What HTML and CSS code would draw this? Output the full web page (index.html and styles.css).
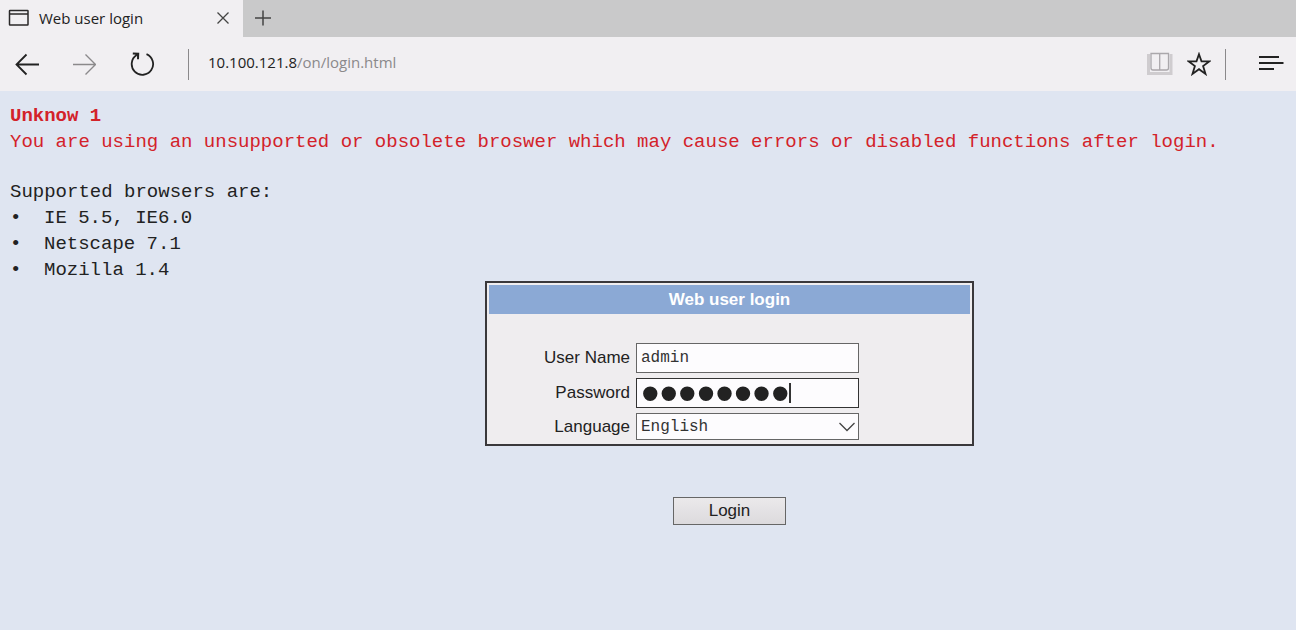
FILE: index.html
```html
<!DOCTYPE html>
<html lang="en">
<head>
    <meta charset="UTF-8">
    <meta name="viewport" content="width=device-width, initial-scale=1.0">
    <title>Web user login</title>
    <link rel="stylesheet" href="styles.css">
</head>
<body>
    <header class="browser">
        <div class="tabs">
            <div class="tab">
                <svg class="page-icon" width="22" height="18" viewBox="0 0 22 18" fill="none" stroke="#2a2829" stroke-width="1.5">
                    <rect x="1.5" y="1.5" width="18.5" height="14.5" rx="0.5"/>
                    <path d="M1.5 5H20"/>
                </svg>
                <span class="tab-title">Web user login</span>
                <button class="icon-button" type="button" aria-label="Close tab">
                    <svg width="14" height="14" viewBox="0 0 14 14" fill="none" stroke="#444" stroke-width="1.3">
                        <path d="M1.5 1.5L12.5 12.5M12.5 1.5L1.5 12.5"/>
                    </svg>
                </button>
            </div>
            <button class="icon-button new-tab" type="button" aria-label="New tab">
                <svg width="16" height="16" viewBox="0 0 16 16" fill="none" stroke="#444" stroke-width="1.5">
                    <path d="M8 0.5V15.5M0 8H16"/>
                </svg>
            </button>
        </div>
        <nav class="toolbar">
            <button class="icon-button" type="button" aria-label="Back">
                <svg width="24" height="24" viewBox="0 0 24 24" fill="none" stroke="#222" stroke-width="1.8">
                    <path d="M24 12.5H1.5M11.5 2.5L1.5 12.5L11.5 22.5"/>
                </svg>
            </button>
            <button class="icon-button" type="button" aria-label="Forward">
                <svg width="24" height="24" viewBox="0 0 24 24" fill="none" stroke="#8b898b" stroke-width="1.4">
                    <path d="M1 12.5H23.5M13.5 2.5L23.5 12.5L13.5 22.5"/>
                </svg>
            </button>
            <button class="icon-button" type="button" aria-label="Refresh">
                <svg width="26" height="26" viewBox="0 0 26 26" fill="none" stroke="#222" stroke-width="1.8">
                    <path d="M17.5 3.2A10.7 10.7 0 1 1 7.6 4.1"/>
                    <path d="M3.8 2.5L9.2 2.8L9 8.2" stroke-width="2"/>
                    <path d="M5.5 2.5H9.3V6.5Z" fill="#222" stroke="none"/>
                </svg>
            </button>
            <span class="divider"></span>
            <div class="address"><span class="host">10.100.121.8</span>/on/login.html</div>
            <div class="tools">
                <button class="icon-button" type="button" aria-label="Reading view">
                    <svg width="26" height="24" viewBox="0 0 26 24" fill="none" stroke="#aaa7ab" stroke-width="1.3">
                        <path d="M1.5 2V21.5H24V2" stroke="#cfcccf" stroke-width="3"/>
                        <path d="M4 1.5H21.5V16Q21.5 18 19.5 18H6Q4 18 4 16ZM12.7 2V18"/>
                    </svg>
                </button>
                <button class="icon-button" type="button" aria-label="Favorites">
                    <svg width="24" height="24" viewBox="0 0 24 24" fill="none" stroke="#222" stroke-width="1.8">
                        <path d="M12 2.2L14.5 9.4H22.2L16.1 14L18.5 21.9L12 17.2L5.5 21.9L7.9 14L1.8 9.4H9.5Z"/>
                    </svg>
                </button>
                <span class="divider"></span>
                <button class="icon-button menu" type="button" aria-label="Hub">
                    <svg width="26" height="18" viewBox="0 0 26 18" stroke="#222" stroke-width="2">
                        <path d="M1 2H21M1 8H25.5M1 14H16"/>
                    </svg>
                </button>
            </div>
        </nav>
    </header>

    <main class="page">
        <div class="warning">
            <strong>Unknow 1</strong>
            <p>You are using an unsupported or obsolete broswer which may cause errors or disabled functions after login.</p>
        </div>
        <div class="supported">
            <p>Supported browsers are:</p>
            <ul>
                <li>IE 5.5, IE6.0</li>
                <li>Netscape 7.1</li>
                <li>Mozilla 1.4</li>
            </ul>
        </div>

        <form class="login">
            <div class="login-box">
                <h1>Web user login</h1>
                <div class="fields">
                    <label for="username">User Name</label>
                    <input type="text" id="username" value="admin">
                    <label for="password">Password</label>
                    <div class="password">
                        <input type="password" id="password" value="12345678">
                        <span class="caret"></span>
                    </div>
                    <label for="language">Language</label>
                    <div class="select">
                        <select id="language">
                            <option>English</option>
                        </select>
                        <svg class="chevron" width="16" height="10" viewBox="0 0 16 10" fill="none" stroke="#444" stroke-width="1.3">
                            <path d="M0.5 1L8 8.5L15.5 1"/>
                        </svg>
                    </div>
                </div>
            </div>
            <button class="submit" type="button">Login</button>
        </form>
    </main>
</body>
</html>
```
FILE: styles.css
```css
* {
    box-sizing: border-box;
}
body {
    margin: 0;
    min-height: 100vh;
    background-color: #dfe5f1;
    color: #222;
    font-family: "Liberation Sans", Arial, sans-serif;
    font-size: 17px;
}
p, ul, h1 {
    margin: 0;
    padding: 0;
}
.browser {
    background-color: #f1eff2;
    font-family: "Open Sans", "Noto Sans", sans-serif;
    font-size: 15px;
}
.icon-button {
    display: flex;
    padding: 0;
    border: 0;
    background: none;
}
.tabs {
    display: flex;
    height: 37px;
    padding-bottom: 2px;
    background-color: #c9c9ca;
    box-shadow: inset 243px 0 #f1eff2;
}
.tab {
    display: flex;
    align-items: center;
    width: 243px;
    padding: 0 13px 0 8px;
}
.tab-title {
    flex: 1;
    margin-left: 9px;
}
.new-tab {
    align-self: center;
    margin-left: 12px;
}
.toolbar {
    display: flex;
    align-items: center;
    gap: 33px;
    height: 54px;
    padding: 0 12px 0 15px;
}
.divider {
    width: 1px;
    height: 31px;
    background-color: #8b898b;
}
.address {
    flex: 1;
    margin: 0 0 4px -14px;
    color: #8b898b;
}
.host {
    color: #222;
}
.tools {
    display: flex;
    align-items: center;
    gap: 14px;
}
.menu {
    margin-left: 18px;
}
.page {
    padding: 12px 10px;
}
.warning, .supported {
    font-family: "Liberation Mono", "Courier New", monospace;
    font-size: 19px;
    line-height: 26px;
}
.warning {
    margin-bottom: 24px;
    color: #d3222a;
}
.supported {
    margin-bottom: -2px;
}
.supported ul {
    list-style: none;
}
.supported li {
    display: flex;
}
.supported li::before {
    content: "•";
    width: 34px;
}
.login {
    display: flex;
    flex-direction: column;
    align-items: center;
    margin-left: 163px;
}
.login-box {
    width: 489px;
    padding: 2px 2px 4px;
    border: 2px solid #3a383b;
    background-color: #efedef;
}
.login-box h1 {
    margin-bottom: 29px;
    background-color: #8ba9d5;
    color: #fff;
    font-size: 17px;
    line-height: 29px;
    text-align: center;
}
.fields {
    display: grid;
    grid-template-columns: 141px 223px;
    gap: 5px 6px;
    align-items: center;
}
.fields label {
    text-align: right;
}
.fields input, .fields select {
    display: block;
    width: 100%;
    height: 30px;
    padding: 0 4px;
    border: 1px solid #666;
    border-radius: 0;
    outline: 0;
    background-color: #fdfcfe;
    color: #333;
    font-family: "Liberation Mono", "Courier New", monospace;
    font-size: 16px;
}
.fields select {
    height: 27px;
    appearance: none;
}
.password, .select {
    position: relative;
}
.password input {
    border-color: #333;
    color: #222;
    font-family: "Liberation Sans", Arial, sans-serif;
    font-size: 53px;
}
.caret {
    position: absolute;
    top: 5px;
    left: 153px;
    width: 2px;
    height: 20px;
    background-color: #333;
}
.chevron {
    position: absolute;
    top: 9px;
    right: 4px;
    pointer-events: none;
}
.submit {
    width: 113px;
    height: 28px;
    margin-top: 51px;
    padding: 0;
    border: 1px solid #666;
    background: linear-gradient(#ebe9eb, #dcdadd);
    color: #222;
    font-family: inherit;
    font-size: 17px;
}
```
